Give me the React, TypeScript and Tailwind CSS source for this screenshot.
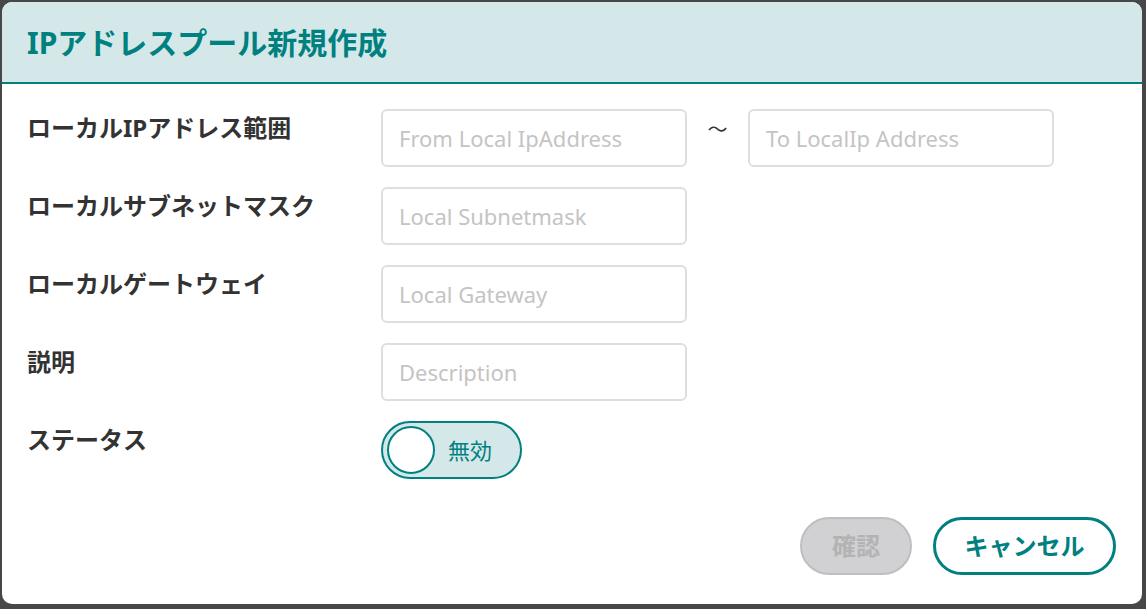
import { useState } from "react";

const fields = [
  { label: "ローカルサブネットマスク", placeholder: "Local Subnetmask" },
  { label: "ローカルゲートウェイ", placeholder: "Local Gateway" },
  { label: "説明", placeholder: "Description" },
];

const inputCls =
  "h-[58px] w-[306px] rounded-[6px] border-2 border-[#dedede] bg-white px-[16px] text-[22px] text-[#333] outline-none placeholder:text-[#c4c4c4]";

const labelCls = "w-[354px] pt-[3px] text-[24px] leading-[32px] font-bold text-[#333]";

export default function App() {
  const [enabled, setEnabled] = useState(false);

  return (
    <div
      className="h-[609px] w-[1146px] overflow-hidden bg-[#474747] pl-[2px] pt-[2px]"
      style={{ fontFamily: '"Noto Sans", "Noto Sans CJK JP", sans-serif' }}
    >
      <div className="flex h-[602px] w-[1140px] flex-col overflow-hidden rounded-[10px] bg-white">
        <div className="flex h-[82px] shrink-0 items-center border-b-2 border-[#00807f] bg-[#d4e8e9] pl-[25px]">
          <h1 className="text-[30px] font-bold text-[#00807f]">IPアドレスプール新規作成</h1>
        </div>

        <div className="flex flex-1 flex-col px-[25px] pt-[25px]">
          <div className="flex flex-col gap-[20px]">
            <div className="flex">
              <label className={labelCls}>ローカルIPアドレス範囲</label>
              <input className={inputCls} placeholder="From Local IpAddress" />
              <span className="w-[61px] pt-[6px] text-center text-[20px] text-[#333]">～</span>
              <input className={inputCls} placeholder="To LocalIp Address" />
            </div>

            {fields.map((f) => (
              <div key={f.label} className="flex">
                <label className={labelCls}>{f.label}</label>
                <input className={inputCls} placeholder={f.placeholder} />
              </div>
            ))}

            <div className="flex">
              <label className={labelCls}>ステータス</label>
              <button
                onClick={() => setEnabled(!enabled)}
                className="flex h-[58px] w-[141px] items-center rounded-full border-2 border-[#00807f] bg-[#d4e8e9] pl-[4px]"
              >
                <span className="h-[48px] w-[48px] rounded-full border-2 border-[#00807f] bg-white" />
                <span className="ml-[13px] text-[22px] text-[#00807f]">{enabled ? "有効" : "無効"}</span>
              </button>
            </div>
          </div>

          <div className="mt-[38px] flex justify-end gap-[21px] pr-[1px]">
            <button
              disabled
              className="h-[58px] w-[112px] rounded-full border-2 border-[#bfbfbf] bg-[#d1d0d3] text-[24px] font-bold text-[#b3b3b3]"
            >
              確認
            </button>
            <button className="h-[58px] w-[183px] rounded-full border-[3px] border-[#00807f] bg-white text-[24px] font-bold text-[#00807f]">
              キャンセル
            </button>
          </div>
        </div>
      </div>
    </div>
  );
}
